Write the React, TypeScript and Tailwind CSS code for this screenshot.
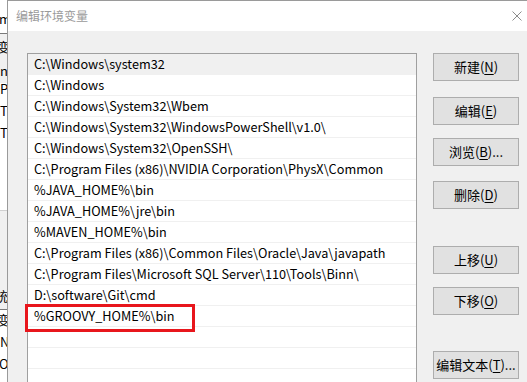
import React from "react"

const paths = [
  "C:\\Windows\\system32",
  "C:\\Windows",
  "C:\\Windows\\System32\\Wbem",
  "C:\\Windows\\System32\\WindowsPowerShell\\v1.0\\",
  "C:\\Windows\\System32\\OpenSSH\\",
  "C:\\Program Files (x86)\\NVIDIA Corporation\\PhysX\\Common",
  "%JAVA_HOME%\\bin",
  "%JAVA_HOME%\\jre\\bin",
  "%MAVEN_HOME%\\bin",
  "C:\\Program Files (x86)\\Common Files\\Oracle\\Java\\javapath",
  "C:\\Program Files\\Microsoft SQL Server\\110\\Tools\\Binn\\",
  "D:\\software\\Git\\cmd",
  "%GROOVY_HOME%\\bin",
]

const buttons = [
  { pre: "新建(", key: "N", post: ")", mt: "mt-0" },
  { pre: "编辑(", key: "E", post: ")", mt: "mt-[16px]" },
  { pre: "浏览(", key: "B", post: ")...", mt: "mt-[13px]" },
  { pre: "删除(", key: "D", post: ")", mt: "mt-[15px]" },
  { pre: "上移(", key: "U", post: ")", mt: "mt-[37px]" },
  { pre: "下移(", key: "O", post: ")", mt: "mt-[13px]" },
  { pre: "编辑文本(", key: "T", post: ")...", mt: "mt-[36px]" },
]

// clipped edge of the window behind the dialog
function BackStrip() {
  return (
    <div className="flex w-[7px] shrink-0 flex-col overflow-hidden whitespace-nowrap text-[13px] leading-none text-black">
      <div className="h-[10px] shrink-0" />
      <div className="flex h-[16px] shrink-0 items-center -ml-[1px]">m</div>
      <div className="h-[8px] shrink-0 border-b border-[#7a7a7a]" />
      <div className="flex h-[49px] shrink-0 flex-col bg-[#f0f0f0]">
        <div className="flex h-[19px] items-end -ml-[3px]">变量</div>
        <div className="flex h-[24px] items-end">n</div>
      </div>
      <div className="flex h-[12px] shrink-0 items-end">Path</div>
      <div className="flex h-[22px] shrink-0 items-end">TEMP</div>
      <div className="flex h-[22px] shrink-0 items-end">TMP</div>
      <div className="h-[72px] shrink-0 border-b border-[#d0d0d0]" />
      <div className="flex h-[98px] shrink-0 items-end bg-[#f0f0f0] pb-[7px] -ml-[5px]">统</div>
      <div className="h-px shrink-0 bg-[#7a7a7a]" />
      <div className="flex h-[16px] shrink-0 items-end -ml-[3px]">变量</div>
      <div className="flex h-[22px] shrink-0 items-end">NUMBER</div>
      <div className="flex h-[22px] shrink-0 items-end -ml-[1px]">OS</div>
    </div>
  )
}

export default function App() {
  return (
    <div
      className="flex h-[382px] w-[527px] overflow-hidden bg-white"
      style={{ fontFamily: '"Noto Sans CJK SC", "Noto Sans", sans-serif' }}
    >
      <BackStrip />
      <div className="flex flex-1 flex-col border-l border-t border-[#9a9a9a]">
        <div className="flex h-[30px] shrink-0 items-center justify-between bg-white pl-[8px] pr-[5px]">
          <span className="text-[12px] text-[#9a9a9a]">编辑环境变量</span>
          <svg width="10" height="10" viewBox="0 0 10 10" className="stroke-[#8c8c8c]">
            <path d="M0.5 0.5 L9.5 9.5 M9.5 0.5 L0.5 9.5" strokeWidth="1" />
          </svg>
        </div>
        <div className="flex flex-1 bg-[#f0f0f0] pl-[19px] pt-[22px]">
          <div className="relative h-[340px] w-[390px] shrink-0 border border-[#9f9f9f] bg-white">
            {paths.map((p, i) => (
              <div
                key={i}
                className={`flex h-[21px] items-center border-b border-[#f0f0f0] pl-[6px] text-[12.7px] whitespace-nowrap text-black ${
                  i === 0 ? "bg-[#f0f0f0]" : ""
                }`}
              >
                {p}
              </div>
            ))}
            {[0, 1, 2].map((i) => (
              <div key={"e" + i} className="h-[21px] border-b border-[#f0f0f0]" />
            ))}
            <div className="absolute left-[-3px] top-[250px] h-[28px] w-[170px] border-[3px] border-[#e8161c]" />
          </div>
          <div className="ml-[16px] flex w-[86px] shrink-0 flex-col">
            {buttons.map((b) => (
              <button
                key={b.key}
                className={`${b.mt} flex h-[28px] items-center justify-center border border-[#adadad] bg-[#e1e1e1] text-[13px] text-black`}
              >
                {b.pre}
                <span className="underline underline-offset-2">{b.key}</span>
                {b.post}
              </button>
            ))}
          </div>
        </div>
      </div>
    </div>
  )
}
